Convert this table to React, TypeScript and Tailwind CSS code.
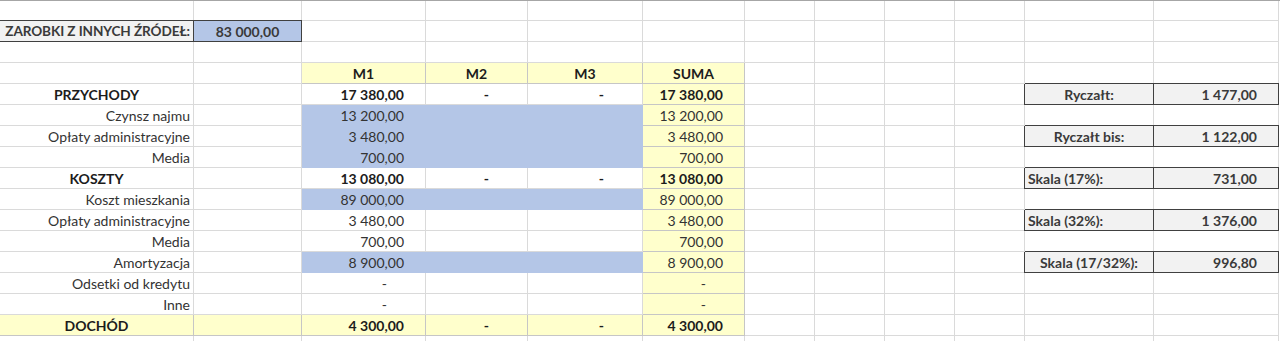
import type { ReactNode } from "react";

const W = [
  "w-[194px]",
  "w-[108px]",
  "w-[124px]",
  "w-[102px]",
  "w-[115px]",
  "w-[102px]",
  "w-[70px]",
  "w-[70px]",
  "w-[70px]",
  "w-[70px]",
  "w-[129px]",
  "w-[125px]",
];

type C = { t?: ReactNode; cls?: string };

const grid = "border-[#dadada]";
const blue = "bg-[#b4c6e7] border-[#b4c6e7]";
const yellow = "bg-[#ffffcc] border-[#c6c6c6]";
const num = "justify-end pr-[21px]";
const dash = "justify-end pr-[38px]";
const center = "justify-center";
const label = "justify-end pr-[3px]";
const bold = "font-bold text-[#1c1c1c]";
const boxLabel =
  "bg-[#f2f2f2] border-[#404040] shadow-[0_-1px_0_#404040,-1px_0_0_#404040] font-bold text-[#3a3a3a]";
const boxValue =
  "bg-[#f2f2f2] border-[#404040] shadow-[0_-1px_0_#404040] font-bold text-[#3a3a3a] justify-end pr-[21px]";

function Row({ cells = {}, h = "h-[21px]" }: { cells?: Record<number, C>; h?: string }) {
  return (
    <div className={`flex ${h}`}>
      {W.map((w, i) => {
        const c = cells[i];
        return (
          <div
            key={i}
            className={`${w} shrink-0 flex items-center border-r border-b whitespace-nowrap overflow-hidden ${c?.cls ?? grid}`}
          >
            {c?.t}
          </div>
        );
      })}
    </div>
  );
}

// rows with a blue input band over M1..M3
function InputRow({ name, value, box }: { name: string; value: string; box?: [string, string] }) {
  return (
    <Row
      cells={{
        0: { t: name, cls: `${grid} ${label}` },
        2: { t: value, cls: `${blue} ${num}` },
        3: { cls: blue },
        4: { cls: blue },
        5: { t: value, cls: `${yellow} ${num}` },
        ...(box ? { 10: { t: box[0], cls: `${boxLabel} ${center}` }, 11: { t: box[1], cls: boxValue } } : {}),
      }}
    />
  );
}

function PlainRow({ name, value, box }: { name: string; value: string; box?: [string, string, string] }) {
  const isDash = value === "-";
  return (
    <Row
      cells={{
        0: { t: name, cls: `${grid} ${label}` },
        2: { t: value, cls: `${grid} ${isDash ? dash : num}` },
        5: { t: value, cls: `${yellow} ${isDash ? dash : num}` },
        ...(box ? { 10: { t: box[0], cls: `${boxLabel} ${box[2]}` }, 11: { t: box[1], cls: boxValue } } : {}),
      }}
    />
  );
}

function SumRow({ name, value, box }: { name: string; value: string; box: [string, string, string] }) {
  return (
    <Row
      cells={{
        0: { t: name, cls: `${grid} ${center} ${bold}` },
        2: { t: value, cls: `${grid} ${num} ${bold}` },
        3: { t: "-", cls: `${grid} ${dash} ${bold}` },
        4: { t: "-", cls: `${grid} ${dash} ${bold}` },
        5: { t: value, cls: `${yellow} ${num} ${bold}` },
        10: { t: box[0], cls: `${boxLabel} ${box[2]}` },
        11: { t: box[1], cls: boxValue },
      }}
    />
  );
}

export default function App() {
  return (
    <div className="w-[1280px] h-[341px] overflow-hidden bg-white border-t border-[#a6a6a6] font-['Lato','Open_Sans',sans-serif] text-[14px] text-[#333333]">
      <Row h="h-[20px]" />
      <Row
        cells={{
          0: {
            t: "ZAROBKI Z INNYCH ŹRÓDEŁ:",
            cls: `${boxLabel} justify-end pr-[3px] text-[13.6px] tracking-[-0.1px]`,
          },
          1: {
            t: "83 000,00",
            cls: "bg-[#b4c6e7] border-[#404040] shadow-[0_-1px_0_#404040] font-bold text-[#3a3a3a] justify-center",
          },
        }}
      />
      <Row />
      <Row
        cells={{
          2: { t: "M1", cls: `${yellow} ${center} ${bold}` },
          3: { t: "M2", cls: `${yellow} ${center} ${bold}` },
          4: { t: "M3", cls: `${yellow} ${center} ${bold}` },
          5: { t: "SUMA", cls: `${yellow} ${center} ${bold}` },
        }}
      />
      <SumRow name="PRZYCHODY" value="17 380,00" box={["Ryczałt:", "1 477,00", center]} />
      <InputRow name="Czynsz najmu" value="13 200,00" />
      <InputRow name="Opłaty administracyjne" value="3 480,00" box={["Ryczałt bis:", "1 122,00"]} />
      <InputRow name="Media" value="700,00" />
      <SumRow name="KOSZTY" value="13 080,00" box={["Skala (17%):", "731,00", "justify-start pl-[3px]"]} />
      <InputRow name="Koszt mieszkania" value="89 000,00" />
      <PlainRow
        name="Opłaty administracyjne"
        value="3 480,00"
        box={["Skala (32%):", "1 376,00", "justify-start pl-[3px]"]}
      />
      <PlainRow name="Media" value="700,00" />
      <InputRow name="Amortyzacja" value="8 900,00" box={["Skala (17/32%):", "996,80"]} />
      <PlainRow name="Odsetki od kredytu" value="-" />
      <PlainRow name="Inne" value="-" />
      <Row
        cells={{
          0: { t: "DOCHÓD", cls: `${yellow} ${center} ${bold}` },
          1: { cls: yellow },
          2: { t: "4 300,00", cls: `${yellow} ${num} ${bold}` },
          3: { t: "-", cls: `${yellow} ${dash} ${bold}` },
          4: { t: "-", cls: `${yellow} ${dash} ${bold}` },
          5: { t: "4 300,00", cls: `${yellow} ${num} ${bold}` },
        }}
      />
      <Row />
    </div>
  );
}
